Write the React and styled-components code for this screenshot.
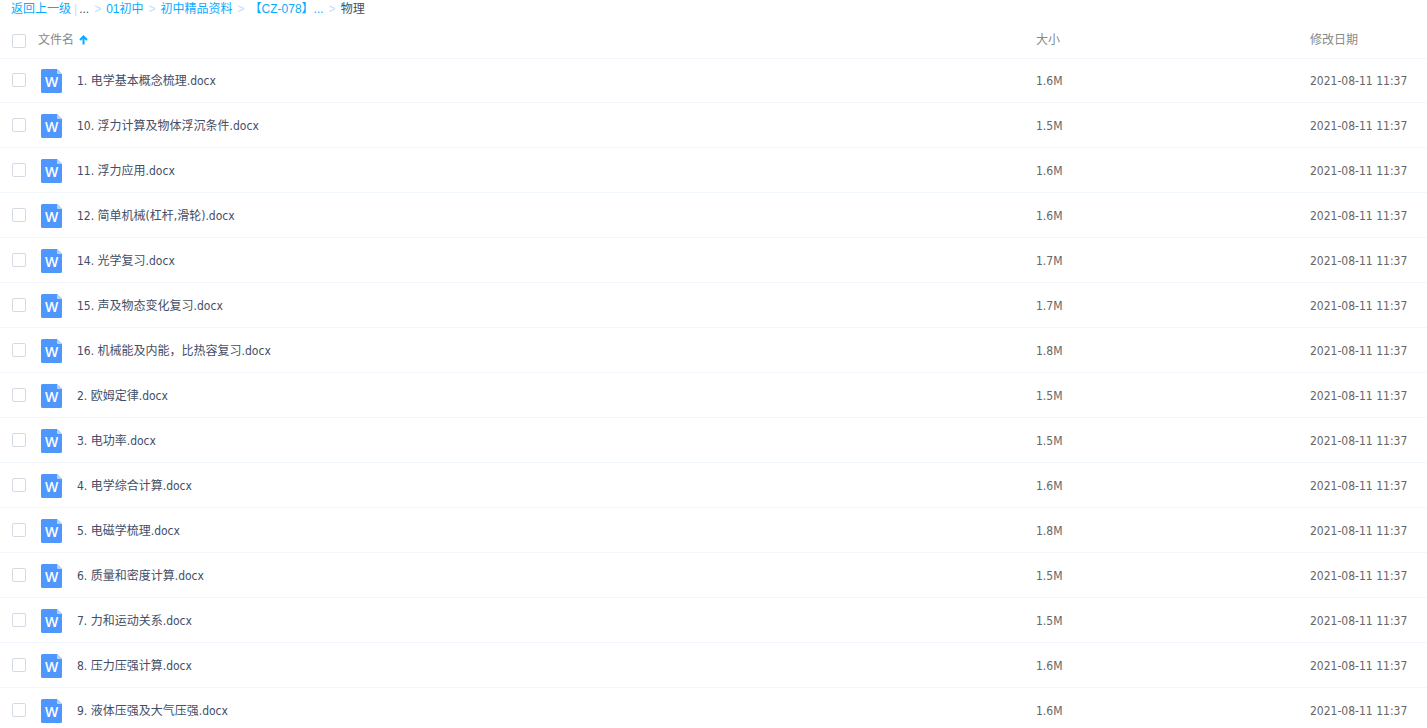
import React from 'react';
import styled, { createGlobalStyle } from 'styled-components';

const GlobalStyle = createGlobalStyle`
  * { box-sizing: border-box; }
  body {
    margin: 0;
    background: #fff;
    color: #424e67;
    font: 12px/18px "DejaVu Sans Condensed", "Noto Sans CJK SC", sans-serif;
  }
`;

const Page = styled.main`
  display: flex;
  flex-direction: column;
  height: 100vh;
  overflow: hidden;
`;

const Breadcrumb = styled.nav`
  flex: none;
  display: flex;
  height: 22px;
  padding-left: 11px;
  font-family: "Liberation Sans", "Noto Sans CJK SC", sans-serif;
  white-space: nowrap;
`;

const CrumbLink = styled.a`
  color: #09aaff;
  text-decoration: none;
`;

const Divider = styled.span`
  margin: 0 2px 0 3px;
  color: #c4dbfe;
`;

const Separator = styled.span`
  margin: 0 5px;
  color: #c4dbfe;
`;

const Current = styled.span`
  color: #424e67;
`;

const ListArea = styled.div`
  flex: 1;
  min-height: 0;
  overflow-y: auto;
  scrollbar-width: none;
`;

const FileTable = styled.table`
  width: 100%;
  table-layout: fixed;
  border-collapse: separate;
  border-spacing: 0;
`;

const HeadCell = styled.th`
  width: ${(p) => p.$width || 'auto'};
  height: 36px;
  padding: ${(p) => (p.$control ? '2px 0 0' : '0')};
  box-shadow: 0 1px 0 #f2f6fd;
  color: #888;
  font-weight: 400;
  text-align: left;
`;

const Cell = styled.td`
  height: 45px;
  padding: ${(p) => (p.$control ? '0' : '2px 0 0')};
  border-bottom: 1px solid #f2f6fd;
  color: ${(p) => (p.$muted ? '#666' : 'inherit')};
  white-space: nowrap;
`;

const Checkbox = styled.input.attrs({ type: 'checkbox' })`
  appearance: none;
  display: block;
  width: 14px;
  height: 14px;
  margin: 0 0 0 12px;
  border: 1px solid #d4dae3;
  border-radius: 2px;
  background: #fff;
  &:checked { background: #09aaff; border-color: #09aaff; }
`;

const SortButton = styled.button`
  display: flex;
  align-items: center;
  gap: 5px;
  padding: 0;
  border: 0;
  background: none;
  color: inherit;
  font: inherit;
`;

const FileName = styled.label`
  display: flex;
  align-items: center;
  gap: 15px;
  padding-left: 3px;
`;

const Icon = styled.svg`
  flex: none;
  display: block;
`;

const IconLetter = styled.text`
  fill: #fff;
  font: 600 14px "Open Sans", "Noto Sans", sans-serif;
  text-anchor: middle;
`;

const WordIcon = () => (
  <Icon width="21" height="24" viewBox="0 0 21 24" aria-hidden="true">
    <path d="M1.5 0H16l5 5v17.5a1.5 1.5 0 0 1-1.5 1.5h-18A1.5 1.5 0 0 1 0 22.5v-21A1.5 1.5 0 0 1 1.5 0z" fill="#4e97ff" />
    <path d="M16 0l5 5h-4a1 1 0 0 1-1-1z" fill="#b4d3ff" />
    <IconLetter x="10.5" y="18">W</IconLetter>
  </Icon>
);

const ArrowUp = () => (
  <Icon width="9" height="10" viewBox="0 0 9 10" aria-hidden="true">
    <path d="M4.5 9.5V1.5M1 5l3.5-3.5L8 5" fill="none" stroke="#09aaff" strokeWidth="2" />
  </Icon>
);

const crumbs = ['01初中', '初中精品资料', '【CZ-078】...'];

const files = [
  ['1. 电学基本概念梳理.docx', '1.6M'],
  ['10. 浮力计算及物体浮沉条件.docx', '1.5M'],
  ['11. 浮力应用.docx', '1.6M'],
  ['12. 简单机械(杠杆,滑轮).docx', '1.6M'],
  ['14. 光学复习.docx', '1.7M'],
  ['15. 声及物态变化复习.docx', '1.7M'],
  ['16. 机械能及内能，比热容复习.docx', '1.8M'],
  ['2. 欧姆定律.docx', '1.5M'],
  ['3. 电功率.docx', '1.5M'],
  ['4. 电学综合计算.docx', '1.6M'],
  ['5. 电磁学梳理.docx', '1.8M'],
  ['6. 质量和密度计算.docx', '1.5M'],
  ['7. 力和运动关系.docx', '1.5M'],
  ['8. 压力压强计算.docx', '1.6M'],
  ['9. 液体压强及大气压强.docx', '1.6M'],
];

export default function App() {
  return (
    <Page lang="zh-CN">
      <GlobalStyle />
      <Breadcrumb>
        <CrumbLink href="#up">返回上一级</CrumbLink>
        <Divider>|</Divider>
        <Current>...</Current>
        {crumbs.map((name) => (
          <React.Fragment key={name}>
            <Separator>&gt;</Separator>
            <CrumbLink href="#folder">{name}</CrumbLink>
          </React.Fragment>
        ))}
        <Separator>&gt;</Separator>
        <Current>物理</Current>
      </Breadcrumb>
      <ListArea>
        <FileTable>
          <thead>
            <tr>
              <HeadCell $control $width="38px"><Checkbox aria-label="全选" /></HeadCell>
              <HeadCell><SortButton>文件名<ArrowUp /></SortButton></HeadCell>
              <HeadCell $width="274px">大小</HeadCell>
              <HeadCell $width="117px">修改日期</HeadCell>
            </tr>
          </thead>
          <tbody>
            {files.map(([name, size], i) => (
              <tr key={name}>
                <Cell $control><Checkbox id={`file-${i}`} /></Cell>
                <Cell>
                  <FileName htmlFor={`file-${i}`}><WordIcon />{name}</FileName>
                </Cell>
                <Cell $muted>{size}</Cell>
                <Cell $muted>2021-08-11 11:37</Cell>
              </tr>
            ))}
          </tbody>
        </FileTable>
      </ListArea>
    </Page>
  );
}
